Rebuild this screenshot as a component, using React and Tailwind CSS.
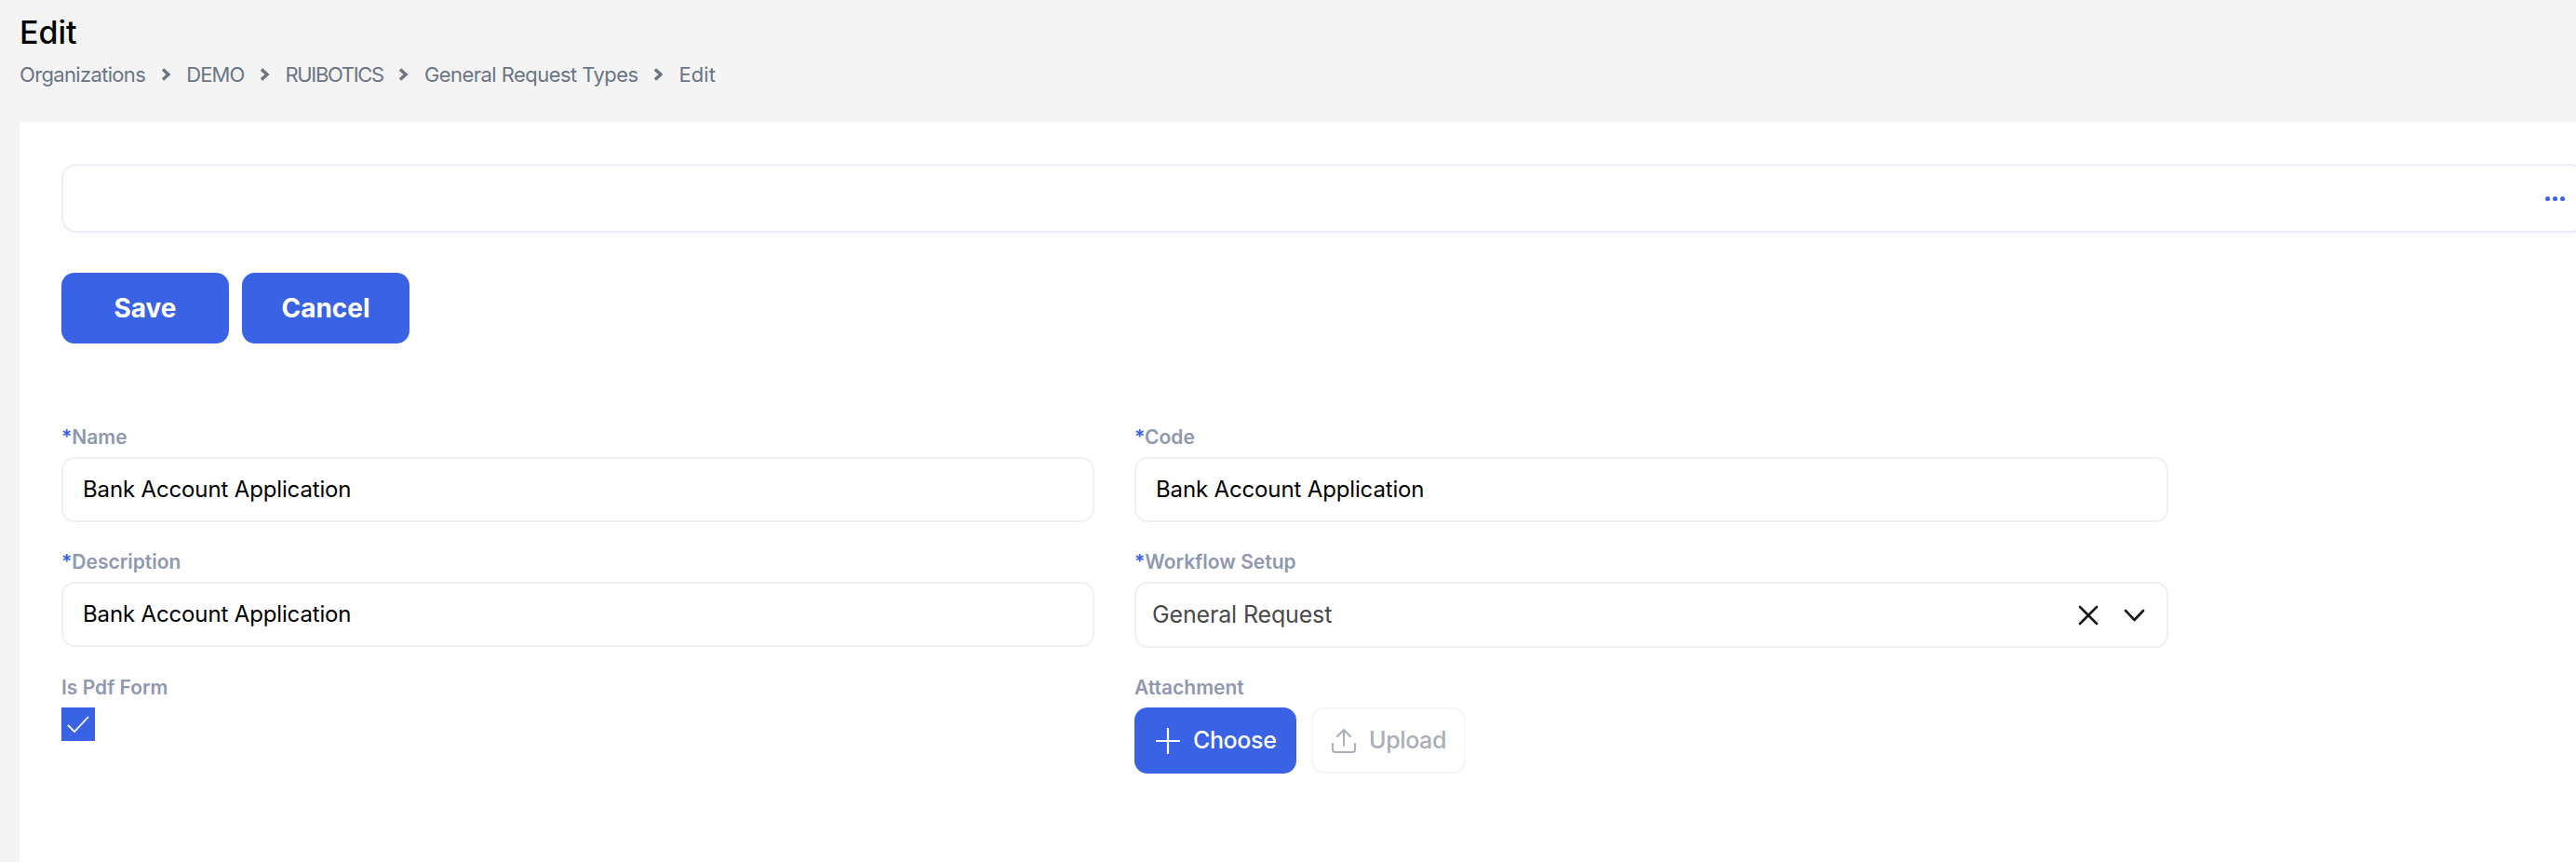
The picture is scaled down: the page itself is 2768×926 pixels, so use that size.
const font = { fontFamily: 'Inter, "Noto Sans", sans-serif' };

const Chevron = () => (
  <svg width="11" height="14" viewBox="0 0 11 14" fill="none" stroke="#6b7280" strokeWidth="3.4">
    <path d="M2 1.5 L8 7 L2 12.5" />
  </svg>
);

const crumbs = [
  { text: 'Organizations', cls: 'tracking-[-0.03em]' },
  { text: 'DEMO', cls: 'tracking-[-0.04em]' },
  { text: 'RUIBOTICS', cls: 'tracking-[-0.06em]' },
  { text: 'General Request Types', cls: 'tracking-[-0.025em]' },
  { text: 'Edit', cls: 'tracking-normal' },
];

const Label = ({ required, children }) => (
  <label className="block h-6 mb-[10px] text-[21px] leading-[25px] font-semibold text-[#8f98ae]">
    {required && <span className="text-[#3a62e5]">*</span>}
    {children}
  </label>
);

const TextField = ({ label, value }) => (
  <div>
    <Label required>{label}</Label>
    <div className="h-[70px] flex items-center pl-[21px] border-2 border-[#eff0f4] rounded-[14px] bg-white text-[24px] tracking-[-0.006em] text-black">
      {value}
    </div>
  </div>
);

const App = () => {
  return (
    <div style={font} className="w-[2768px] h-[926px] overflow-hidden bg-[#f4f4f4]">
      <div className="h-[131px] pl-[21px] pt-[15px]">
        <h1 className="text-[34px] leading-[40px] font-medium text-black">Edit</h1>
        <div className="flex items-center gap-[16.5px] mt-[10px] text-[22px] leading-[30px] text-[#6b7585]">
          {crumbs.map((c, i) => (
            <div key={c.text} className="flex items-center gap-[16.5px]">
              <span className={c.cls}>{c.text}</span>
              {i < crumbs.length - 1 && <Chevron />}
            </div>
          ))}
        </div>
      </div>

      <div className="ml-[21px] h-[795px] overflow-hidden bg-white pl-[45px] pt-[45px]">
        <div className="w-[2712px] h-[74px] flex items-center pr-[20px] justify-end border-2 border-[#eceef5] rounded-[16px] shadow-[0_3px_6px_rgba(0,0,0,0.03)]">
          <div className="flex gap-[3px]">
            <span className="w-[5px] h-[5px] rounded-full bg-[#3a62e5]" />
            <span className="w-[5px] h-[5px] rounded-full bg-[#3a62e5]" />
            <span className="w-[5px] h-[5px] rounded-full bg-[#3a62e5]" />
          </div>
        </div>

        <div className="flex gap-[14px] mt-[43px]">
          <button className="w-[180px] h-[76px] rounded-[14px] bg-[#3a62e5] text-white text-[28px] font-bold">Save</button>
          <button className="w-[180px] h-[76px] rounded-[14px] bg-[#3a62e5] text-white text-[28px] font-bold">Cancel</button>
        </div>

        <div className="grid grid-cols-[1110px_1111px] gap-x-[43px] gap-y-[30px] mt-[88px]">
          <TextField label="Name" value="Bank Account Application" />
          <TextField label="Code" value="Bank Account Application" />
          <TextField label="Description" value="Bank Account Application" />

          <div>
            <Label required>Workflow Setup</Label>
            <div className="h-[71px] flex items-center justify-between pl-[17px] pr-[23px] border-2 border-[#eff0f4] rounded-[14px] text-[25px] tracking-[-0.006em] text-[#4a4a4a]">
              <span>General Request</span>
              <div className="flex items-center gap-[27px]">
                <svg width="22" height="22" viewBox="0 0 22 22" stroke="#1a1a1a" strokeWidth="2.6" strokeLinecap="round">
                  <path d="M2 2 L20 20 M20 2 L2 20" />
                </svg>
                <svg width="23" height="14" viewBox="0 0 23 14" fill="none" stroke="#1a1a1a" strokeWidth="2.6" strokeLinecap="round" strokeLinejoin="round">
                  <path d="M2 2 L11.5 12 L21 2" />
                </svg>
              </div>
            </div>
          </div>

          <div>
            <Label>Is Pdf Form</Label>
            <div className="w-9 h-9 flex items-center justify-center bg-[#3a62e5]">
              <svg width="26" height="18" viewBox="0 0 26 18" fill="none" stroke="white" strokeWidth="1.8">
                <path d="M2 10 L9 17 L24 1" />
              </svg>
            </div>
          </div>

          <div>
            <Label>Attachment</Label>
            <div className="flex gap-4 mt-px">
              <button className="w-[174px] h-[71px] flex items-center pl-[23px] gap-[14px] rounded-[14px] bg-[#3a62e5] text-white text-[25px] font-medium tracking-[-0.015em]">
                <svg width="26" height="28" viewBox="0 0 26 28" stroke="white" strokeWidth="2.2" strokeLinecap="round">
                  <path d="M13 1 V27 M1 14 H25" />
                </svg>
                <span>Choose</span>
              </button>
              <button className="w-[166px] h-[71px] flex items-center pl-[20px] gap-[14px] rounded-[14px] border-2 border-[#f4f5f7] text-[#a9aeb9] text-[25px] font-medium tracking-[-0.015em]">
                <svg width="26" height="26" viewBox="0 0 26 26" fill="none" stroke="#a9aeb9" strokeWidth="2" strokeLinecap="round" strokeLinejoin="round">
                  <path d="M13 18 V1 M6 8 L13 1 L20 8 M1 16 V22 Q1 25 4 25 H22 Q25 25 25 22 V16" />
                </svg>
                <span>Upload</span>
              </button>
            </div>
          </div>
        </div>
      </div>
    </div>
  );
};

export default App;
